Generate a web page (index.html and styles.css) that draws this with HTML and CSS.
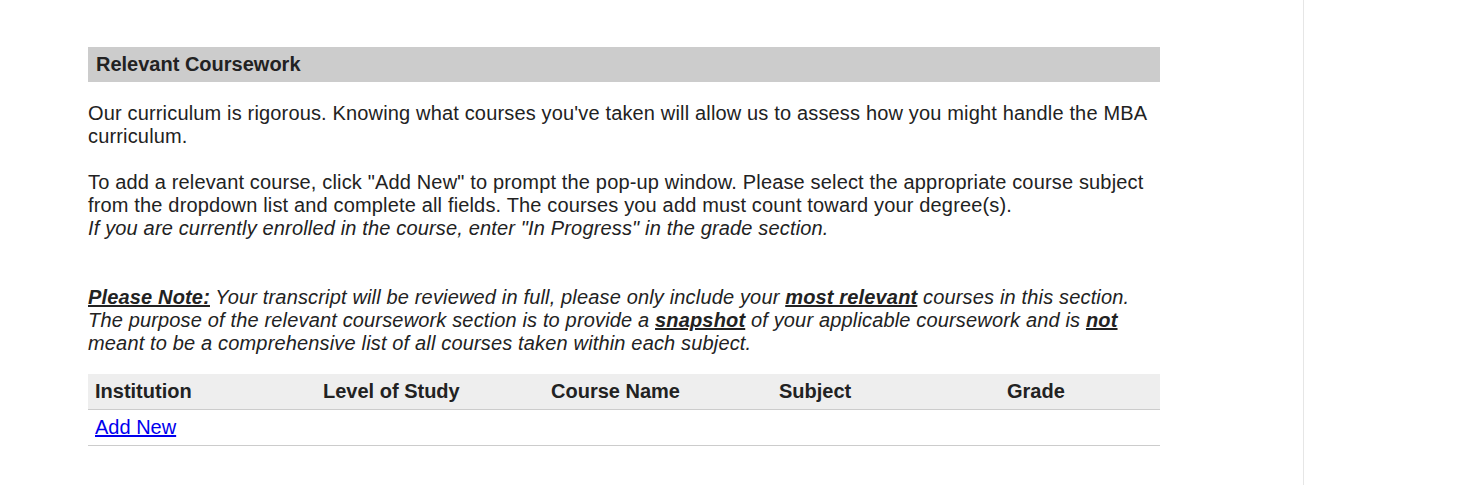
FILE: index.html
```html
<!DOCTYPE html>
<html>
<head>
<meta charset="utf-8">
<link rel="stylesheet" href="styles.css">
</head>
<body>
<div class="page">
  <main class="main">
    <section class="section">
      <h2 class="section-title">Relevant Coursework</h2>
      <div class="intro">
        <p class="para">Our curriculum is rigorous. Knowing what courses you've taken will allow us to assess how you might handle the MBA curriculum.</p>
        <p class="para">To add a relevant course, click "Add New" to prompt the pop-up window. Please select the appropriate course subject from the dropdown list and complete all fields. The courses you add must count toward your degree(s).<br><em>If you are currently enrolled in the course, enter "In Progress" in the grade section.</em></p>
        <p class="para note"><em><u><strong>Please Note:</strong></u> Your transcript will be reviewed in full, please only include your <u><strong>most relevant</strong></u> courses in this section. The purpose of the relevant coursework section is to provide a <u><strong>snapshot</strong></u> of your applicable coursework and is <u><strong>not</strong></u> meant to be a comprehensive list of all courses taken within each subject.</em></p>
      </div>
      <div class="table">
        <div class="row head">
          <div class="cell">Institution</div>
          <div class="cell">Level of Study</div>
          <div class="cell">Course Name</div>
          <div class="cell">Subject</div>
          <div class="cell">Grade</div>
        </div>
        <div class="row body">
          <div class="cell"><a href="#" class="add-link">Add New</a></div>
        </div>
      </div>
    </section>
  </main>
  <aside class="sidebar"></aside>
</div>
</body>
</html>
```
FILE: styles.css
```css
html, body {
  margin: 0;
  padding: 0;
  background: #fff;
}
body {
  font-family: "Liberation Sans", Arial, sans-serif;
  color: #222;
}
.page {
  display: flex;
  min-height: 485px;
}
.main {
  width: 1303px;
  box-sizing: border-box;
  padding: 47px 0 0 88px;
}
.sidebar {
  flex: 1;
  border-left: 1px solid #e6e6e6;
}
.section {
  width: 1072px;
}
.section-title {
  margin: 0;
  background: #ccc;
  height: 35px;
  line-height: 35px;
  padding: 0 8px;
  font-size: 20px;
  font-weight: bold;
  color: #222;
}
.intro {
  padding-top: 20px;
}
.para {
  margin: 0 0 23px;
  font-size: 20px;
  line-height: 23px;
  letter-spacing: 0.16px;
}
.para.note {
  margin-top: 46px;
  margin-bottom: 19px;
}
.table {
  font-size: 20px;
}
.row {
  display: grid;
  grid-template-columns: 228px 228px 228px 228px 1fr;
  height: 35px;
  align-items: center;
  border-bottom: 1px solid #ccc;
}
.row.head {
  background: #eee;
  font-weight: bold;
}
.cell {
  padding-left: 7px;
}
.add-link {
  color: #0000ee;
}
```
